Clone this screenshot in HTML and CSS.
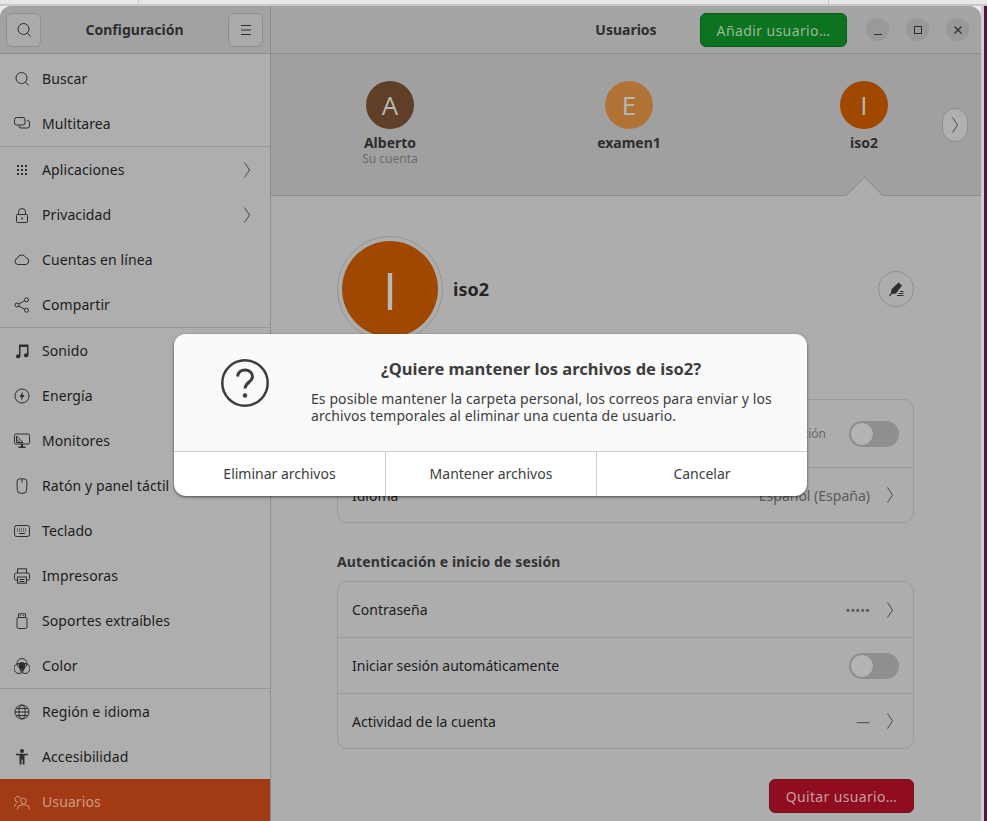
FILE: index.html
```html
<!DOCTYPE html>
<html lang="es">
<head>
    <meta charset="UTF-8">
    <title>Configuración - Usuarios</title>
    <link rel="stylesheet" href="styles.css">
</head>
<body>
    <div class="top-strip"><span class="strip-mark strip-a"></span><span class="strip-mark strip-b"></span></div>
    <div class="desk">
        <div class="window">
            <aside class="sidebar">
                <header class="side-header">
                    <button class="head-btn"><svg width="16" height="16" viewBox="0 0 16 16" fill="none" stroke="#2e2e2e"><circle cx="7.5" cy="7" r="5.5"/><path d="M11.5 11l3 3.5"/></svg></button>
                    <span class="head-title">Configuración</span>
                    <button class="head-btn"><svg width="16" height="16" viewBox="0 0 16 16" fill="none" stroke="#2e2e2e"><path d="M3 3.5h10M3 8h10M3 12.5h10"/></svg></button>
                </header>
                <nav class="side-list">
                    <a class="side-row"><svg class="side-icon" viewBox="0 0 16 16"><circle cx="7.5" cy="7" r="5.5"/><path d="M11.5 11l3 3.5"/></svg>Buscar</a>
                    <a class="side-row"><svg class="side-icon" viewBox="0 0 16 16"><rect x="0.5" y="1.5" width="10.5" height="7.5" rx="2"/><path d="M13 4.5h.5a2 2 0 0 1 2 2V10a2 2 0 0 1-2 2H7a2 2 0 0 1-2-2V9.500"/></svg>Multitarea</a>
                    <div class="side-sep"></div>
                    <a class="side-row"><svg class="side-icon solid" viewBox="0 0 16 16"><path d="M3 3h2v2H3zM7 3h2v2H7zM11 3h2v2h-2zM3 7h2v2H3zM7 7h2v2H7zM11 7h2v2h-2zM3 11h2v2H3zM7 11h2v2H7zM11 11h2v2h-2z"/></svg>Aplicaciones<svg class="chev side-chev" viewBox="0 0 6 16"><path d="M.5.5L5.500 8 .5 15.500"/></svg></a>
                    <a class="side-row"><svg class="side-icon" viewBox="0 0 16 16"><rect x="2.500" y="7.500" width="11" height="8" rx=".8"/><path d="M4.500 7.500V5a3.500 3.500 0 0 1 7 0v2.500"/><circle class="dot" cx="8" cy="11.500" r="1"/></svg>Privacidad<svg class="chev side-chev" viewBox="0 0 6 16"><path d="M.5.5L5.500 8 .5 15.500"/></svg></a>
                    <a class="side-row"><svg class="side-icon" viewBox="0 0 16 16"><path d="M4 12.500a3.200 3.200 0 0 1-.6-6.300A4.500 4.500 0 0 1 11.800 5.600a3.500 3.500 0 0 1 .2 6.900z"/></svg>Cuentas en línea</a>
                    <a class="side-row"><svg class="side-icon" viewBox="0 0 16 16"><circle cx="3" cy="8" r="2"/><circle cx="12.500" cy="2.800" r="2"/><circle cx="12.500" cy="13.200" r="2"/><path d="M4.800 7l6-3.300M4.800 9l6 3.300"/></svg>Compartir</a>
                    <div class="side-sep"></div>
                    <a class="side-row"><svg class="side-icon solid" viewBox="0 0 16 16"><path d="M5 1.500h9.500v10.800a2.300 2 0 1 1-1.500-1.900V4H6.500v9.300a2.300 2 0 1 1-1.500-1.900z"/></svg>Sonido</a>
                    <a class="side-row"><svg class="side-icon" viewBox="0 0 16 16"><circle cx="8" cy="8" r="7"/><path class="dot" d="M8.800 3.500L5.500 9h2l-.5 3.800L10.500 7h-2z"/></svg>Energía</a>
                    <a class="side-row"><svg class="side-icon" viewBox="0 0 16 16"><rect x=".5" y="1" width="15" height="10" rx="1.500"/><path d="M2.500 3l6.500 6.500M2.500 6l3.500 3.500M2.500 3v6.500H9"/><path class="dot" d="M7 11h2v2.500h2.500V15h-7v-1.500H7z"/></svg>Monitores</a>
                    <a class="side-row"><svg class="side-icon" viewBox="0 0 16 16"><path d="M6 .8h4A3 3 0 0 1 13 3.800l-.3 8a3.500 3.500 0 0 1-3.500 3.500H6.800a3.500 3.500 0 0 1-3.500-3.500L3 3.800A3 3 0 0 1 6 .8z"/><path d="M8 1v3.500"/></svg>Ratón y panel táctil</a>
                    <a class="side-row"><svg class="side-icon" viewBox="0 0 16 16"><rect x=".5" y="2.500" width="15" height="11" rx="2"/><path stroke-dasharray="1 1" d="M3 6h10M3 8h10"/><path d="M5 10.500h6"/></svg>Teclado</a>
                    <a class="side-row"><svg class="side-icon" viewBox="0 0 16 16"><path d="M3.500 5V.8h9V5M3.500 12H2a1.500 1.500 0 0 1-1.500-1.500v-4A1.500 1.500 0 0 1 2 5h12a1.500 1.500 0 0 1 1.500 1.500v4A1.500 1.500 0 0 1 14 12h-1.500"/><rect x="3.500" y="9" width="9" height="6.200"/><path d="M5.500 11.500h5M5.500 13.500h5"/></svg>Impresoras</a>
                    <a class="side-row"><svg class="side-icon" viewBox="0 0 16 16"><rect x="3" y="4.500" width="10" height="11" rx="1.500"/><path d="M4.500 4.500V.8h7v3.700M6 2.500h1M9 2.500h1"/></svg>Soportes extraíbles</a>
                    <a class="side-row"><svg class="side-icon" viewBox="0 0 16 16"><circle cx="8" cy="5.500" r="5"/><circle cx="5" cy="10.500" r="5"/><circle cx="11" cy="10.500" r="5"/><path class="dot" d="M4.600 5.600a5 5 0 0 1 6.800 0L11 9.500 8 13.500 5 9.500z"/></svg>Color</a>
                    <div class="side-sep"></div>
                    <a class="side-row"><svg class="side-icon" viewBox="0 0 16 16"><circle cx="8" cy="8" r="7"/><ellipse cx="8" cy="8" rx="3.200" ry="7"/><path d="M1 8h14M2 4.500h12M2 11.500h12"/></svg>Región e idioma</a>
                    <a class="side-row"><svg class="side-icon solid" viewBox="0 0 16 16"><circle cx="8" cy="2" r="2"/><path d="M2 4.800h12v1.500H10.500V15.500H8.600v-5H7.400v5H5.500V6.300H2z"/></svg>Accesibilidad</a>
                    <a class="side-row side-active"><svg class="side-icon" viewBox="0 0 16 16"><circle cx="9.500" cy="7" r="2.800"/><path d="M3.500 15.500v-.5a4 4 0 0 1 4-4h4a4 4 0 0 1 4 4v.5M6.500 4.500a2.800 2.800 0 1 0-2.500 3.500M.5 13v-.5a3 3 0 0 1 2-2.800"/></svg>Usuarios</a>
                </nav>
            </aside>

            <main class="main">
                <header class="main-header">
                    <span></span>
                    <span class="head-title">Usuarios</span>
                    <div class="head-right">
                        <button class="add-btn">Añadir usuario…</button>
                        <div class="win-controls">
                            <span class="win-btn"><svg width="16" height="16" viewBox="0 0 16 16" fill="none" stroke="#2e2e2e"><path d="M4 12.500h8"/></svg></span>
                            <span class="win-btn"><svg width="16" height="16" viewBox="0 0 16 16" fill="none" stroke="#2e2e2e"><rect x="4.500" y="4.500" width="7" height="7"/></svg></span>
                            <span class="win-btn"><svg width="16" height="16" viewBox="0 0 16 16" fill="none" stroke="#2e2e2e" stroke-width="1.200"><path d="M4.500 4.500l7 7M11.500 4.500l-7 7"/></svg></span>
                        </div>
                    </div>
                </header>

                <section class="carousel">
                    <div class="user-item">
                        <div class="avatar av-a">A</div>
                        <div class="user-name">Alberto</div>
                        <div class="user-sub">Su cuenta</div>
                    </div>
                    <div class="user-item">
                        <div class="avatar av-e">E</div>
                        <div class="user-name">examen1</div>
                    </div>
                    <div class="user-item">
                        <div class="avatar av-i">I</div>
                        <div class="user-name">iso2</div>
                    </div>
                    <button class="next-btn"><svg class="chev" width="6" height="16" viewBox="0 0 6 16"><path d="M.5.5L5.500 8 .5 15.500"/></svg></button>
                    <span class="notch"></span>
                </section>

                <section class="content">
                    <div class="profile">
                        <div class="big-ring"><div class="big-avatar">I</div></div>
                        <span class="profile-name">iso2</span>
                        <button class="edit-btn"><svg width="16" height="16" viewBox="0 0 16 16"><path fill="#2e2e2e" d="M10.500 1.500L14 4.500 8 12.500l-4 .5-2.500 2.500-.7-.7 2.200-2.600.5-4z"/><path stroke="#2e2e2e" fill="none" d="M9 14.500h6.500M10.500 12.500h5M12 10.500h3.500"/></svg></button>
                    </div>

                    <div class="card card-account">
                        <div class="row row-tall">
                            <span class="row-note">Cuenta de administración</span>
                            <span class="toggle"></span>
                        </div>
                        <div class="row">
                            <span class="row-label">Idioma</span>
                            <span class="row-value">Español (España)</span>
                            <svg class="chev row-chev" viewBox="0 0 6 16"><path d="M.5.5L5.500 8 .5 15.500"/></svg>
                        </div>
                    </div>

                    <h3 class="section-title">Autenticación e inicio de sesión</h3>
                    <div class="card">
                        <div class="row">
                            <span class="row-label">Contraseña</span>
                            <span class="row-value row-dots">•••••</span>
                            <svg class="chev row-chev" viewBox="0 0 6 16"><path d="M.5.5L5.500 8 .5 15.500"/></svg>
                        </div>
                        <div class="row">
                            <span class="row-label">Iniciar sesión automáticamente</span>
                            <span class="toggle"></span>
                        </div>
                        <div class="row">
                            <span class="row-label">Actividad de la cuenta</span>
                            <span class="row-value">—</span>
                            <svg class="chev row-chev" viewBox="0 0 6 16"><path d="M.5.5L5.500 8 .5 15.500"/></svg>
                        </div>
                    </div>

                    <div class="remove-wrap"><button class="remove-btn">Quitar usuario…</button></div>
                </section>
            </main>

            <div class="dialog">
                <div class="dialog-body">
                    <svg class="dialog-icon" width="48" height="48" viewBox="0 0 48 48" fill="none" stroke="#3d3d3d" stroke-width="2.500"><circle cx="24" cy="24" r="22.700"/><path stroke-width="3" d="M16.500 17.500c.5-4 3.500-6.500 7.500-6.500 4.300 0 7.500 2.800 7.500 6.500 0 5.500-7 5.500-7.500 12"/><circle cx="24" cy="36.500" r="2.200" fill="#3d3d3d" stroke="none"/></svg>
                    <div class="dialog-text">
                        <h2 class="dialog-title">¿Quiere mantener los archivos de iso2?</h2>
                        <p class="dialog-msg">Es posible mantener la carpeta personal, los correos para enviar y los<br>archivos temporales al eliminar una cuenta de usuario.</p>
                    </div>
                </div>
                <div class="dialog-actions">
                    <button class="dialog-btn">Eliminar archivos</button>
                    <button class="dialog-btn">Mantener archivos</button>
                    <button class="dialog-btn">Cancelar</button>
                </div>
            </div>
        </div>
        <div class="desk-edge"></div>
    </div>
</body>
</html>
```

FILE: styles.css
```css
* {
    box-sizing: border-box;
}
html, body {
    margin: 0;
    height: 821px;
    overflow: hidden;
}
body {
    font-family: "Noto Sans", "Open Sans", sans-serif;
    font-size: 14px;
    color: #1c1c1c;
    background-color: #ececec;
}
button {
    font: inherit;
    padding: 0;
}

/* what shows behind the window */
.top-strip {
    height: 6px;
    background-color: #e8e8e8;
    border-bottom: 2px solid #c8c8c8;
    display: flex;
}
.strip-mark {
    width: 1px;
    height: 4px;
    background-color: #c4c4c4;
}
.strip-a {
    margin-left: 138px;
}
.strip-b {
    margin-left: 689px;
}
.desk {
    display: flex;
    height: 815px;
}
.desk-edge {
    width: 6px;
    background-color: #54183f;
    border-left: 3px solid #cfcfcf;
}

/* window */
.window {
    width: 981px;
    position: relative;
    display: flex;
    background-color: #adadad;
    border-radius: 12px 12px 0 0;
    overflow: hidden;
}

/* sidebar */
.sidebar {
    width: 271px;
    flex-shrink: 0;
    background-color: #aeaeae;
    border-right: 1px solid #8c8c8c;
}
.side-header {
    height: 48px;
    padding: 7px 7px 0 6px;
    display: flex;
    justify-content: space-between;
    align-items: flex-start;
    background-color: #a2a2a2;
    border-bottom: 1px solid #8c8c8c;
}
.head-btn {
    width: 35px;
    height: 34px;
    display: flex;
    align-items: center;
    justify-content: center;
    background-color: #aaaaaa;
    border: 1px solid #8f8f8f;
    border-radius: 6px;
}
.head-title {
    font-weight: 700;
    color: #2e2e2e;
    line-height: 34px;
}
.side-list {
    padding-top: 2px;
}
.side-row {
    height: 45px;
    padding-left: 14px;
    padding-right: 20px;
    display: flex;
    align-items: center;
    gap: 12px;
    letter-spacing: 0.1px;
}
.side-icon {
    width: 16px;
    height: 16px;
    flex-shrink: 0;
    fill: none;
    stroke: #2e2e2e;
}
.side-icon.solid {
    fill: #2e2e2e;
    stroke: none;
}
.side-icon .dot {
    fill: #2e2e2e;
    stroke: none;
}
.side-chev {
    margin-left: auto;
}
.chev {
    width: 6px;
    height: 16px;
    fill: none;
    stroke: #4a4a4a;
}
.side-sep {
    height: 1px;
    background-color: #989898;
}
.side-active {
    background-color: #a33a16;
    color: #cd9c85;
}
.side-active .side-icon {
    stroke: #cd9c85;
}

/* main side */
.main {
    flex: 1;
    min-width: 0;
}
.main-header {
    height: 48px;
    padding-top: 7px;
    display: grid;
    grid-template-columns: 1fr auto 1fr;
    align-items: flex-start;
    background-color: #a4a4a4;
    border-bottom: 1px solid #8c8c8c;
}
.head-right {
    display: flex;
    justify-content: flex-end;
    padding-right: 12px;
}
.add-btn {
    width: 147px;
    height: 34px;
    letter-spacing: 0.4px;
    color: #97ba9a;
    background-color: #0e7320;
    border: 1px solid #0a5a18;
    border-radius: 6px;
}
.win-controls {
    display: flex;
    gap: 17px;
    margin: 5px 0 0 19px;
}
.win-btn {
    width: 23px;
    height: 23px;
    display: flex;
    align-items: center;
    justify-content: center;
    border-radius: 50%;
    background-color: #999999;
}

/* user carousel */
.carousel {
    height: 142px;
    padding: 27px 0 0 69px;
    position: relative;
    display: grid;
    grid-template-columns: 239px 235px 100px;
    align-items: start;
    background-color: #a0a0a0;
    border-bottom: 1px solid #8c8c8c;
}
.user-item {
    width: 100px;
    display: flex;
    flex-direction: column;
    align-items: center;
}
.avatar {
    width: 48px;
    height: 48px;
    margin-bottom: 5px;
    display: flex;
    align-items: center;
    justify-content: center;
    border-radius: 50%;
    font-family: "Open Sans", sans-serif;
    font-size: 26px;
    color: #b8b8b8;
}
.av-a {
    background-color: #5f3f27;
}
.av-e {
    background-color: #b17335;
}
.av-i {
    background-color: #a04800;
}
.user-name {
    font-weight: 700;
    color: #2e2e2e;
    line-height: 18px;
}
.user-sub {
    font-size: 12px;
    line-height: 13px;
    color: #6c6c6c;
}
.next-btn {
    position: absolute;
    left: 671px;
    top: 54px;
    width: 26px;
    height: 34px;
    display: flex;
    align-items: center;
    justify-content: center;
    background-color: #b0b0b0;
    border: 1px solid #8e8e8e;
    border-radius: 13px;
}
.notch {
    position: absolute;
    left: 579.5px;
    bottom: -13.5px;
    width: 27px;
    height: 27px;
    background-color: #adadad;
    border-top: 1px solid #8c8c8c;
    border-left: 1px solid #8c8c8c;
    transform: rotate(45deg);
}

/* user details */
.content {
    padding: 40px 67px 0 66px;
}
.profile {
    height: 106px;
    display: flex;
    align-items: center;
}
.big-ring {
    width: 106px;
    height: 106px;
    padding: 4px;
    border: 1px solid #939393;
    border-radius: 50%;
}
.big-avatar {
    width: 96px;
    height: 96px;
    display: flex;
    align-items: center;
    justify-content: center;
    border-radius: 50%;
    font-family: "Open Sans", sans-serif;
    font-size: 52px;
    color: #b8b8b8;
    background-color: #a04800;
}
.profile-name {
    margin-left: 10px;
    font-size: 18px;
    font-weight: 700;
    color: #262626;
}
.edit-btn {
    width: 36px;
    height: 36px;
    margin-left: auto;
    display: flex;
    align-items: center;
    justify-content: center;
    background: none;
    border: 1px solid #8f8f8f;
    border-radius: 50%;
}
.card {
    border: 1px solid #9a9a9a;
    border-radius: 10px;
}
.card-account {
    margin-top: 57px;
}
.row {
    height: 56px;
    padding: 0 20px 0 14px;
    display: flex;
    align-items: center;
    border-top: 1px solid #9a9a9a;
}
.row:first-child,
.row:last-child {
    height: 55px;
}
.row:first-child {
    border-top: none;
}
.row-tall:first-child {
    height: 67px;
}
.row-label {
    color: #1c1c1c;
}
.row-note {
    margin-left: auto;
    margin-right: 23px;
    font-size: 12px;
    color: #6a6a6a;
}
.row-value {
    margin-left: auto;
    color: #5a5a5a;
}
.row-dots {
    font-size: 13px;
}
.row-chev {
    margin-left: 17px;
}
.toggle {
    width: 50px;
    height: 26px;
    margin-left: auto;
    margin-right: -6px;
    position: relative;
    border-radius: 13px;
    background-color: #8f8f8f;
}
.row-tall .toggle {
    margin-left: 0;
}
.toggle::before {
    content: "";
    position: absolute;
    left: 2px;
    top: 2px;
    width: 22px;
    height: 22px;
    border-radius: 50%;
    background-color: #b4b4b4;
    box-shadow: 0 0 1px #777;
}
.section-title {
    margin: 29px 0 9px;
    font-size: 14px;
    line-height: 20px;
    font-weight: 700;
    letter-spacing: 0.12px;
    color: #333333;
}
.remove-wrap {
    margin-top: 30px;
    display: flex;
    justify-content: flex-end;
}
.remove-btn {
    width: 145px;
    height: 34px;
    letter-spacing: 0.35px;
    color: #c79ea3;
    background-color: #8f0d1e;
    border: 1px solid #73101c;
    border-radius: 6px;
}

/* dialog on top of the window */
.dialog {
    position: absolute;
    left: 174px;
    top: 328px;
    width: 633px;
    height: 162px;
    display: flex;
    flex-direction: column;
    overflow: hidden;
    border-radius: 12px;
    box-shadow: 0 1px 3px rgba(0, 0, 0, 0.6);
    background-color: #ffffff;
    color: #3d3d3d;
}
.dialog-body {
    height: 118px;
    padding: 25px 0 0 47px;
    display: flex;
    background-color: #fafafa;
    border-bottom: 1px solid #cfcfcf;
}
.dialog-text {
    margin-left: 42px;
}
.dialog-title {
    margin: 0 0 11px;
    width: 460px;
    font-size: 16.5px;
    line-height: 20px;
    font-weight: 700;
    text-align: center;
}
.dialog-msg {
    margin: 0;
    line-height: 17px;
    letter-spacing: 0.09px;
    white-space: nowrap;
}
.dialog-actions {
    flex: 1;
    display: grid;
    grid-template-columns: 212px 211px 210px;
}
.dialog-btn {
    padding-bottom: 2px;
    color: #3d3d3d;
    background: none;
    border: none;
    border-right: 1px solid #cfcfcf;
}
.dialog-btn:last-child {
    border-right: none;
}
```
